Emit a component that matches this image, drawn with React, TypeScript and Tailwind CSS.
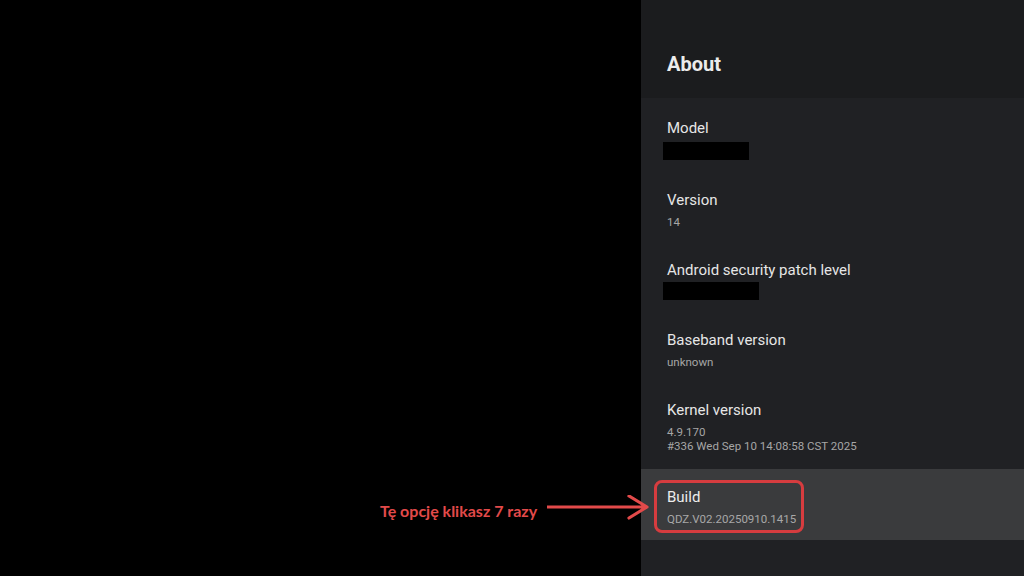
const items = [
  { label: "Model", redacted: 86, pt: "pt-4", pb: "pb-[14px]", gap: "mt-1" },
  { label: "Version", values: ["14"], pt: "pt-4", pb: "pb-[15px]" },
  { label: "Android security patch level", redacted: 96, pt: "pt-4", pb: "pb-[14px]", gap: "mt-[2px]" },
  { label: "Baseband version", values: ["unknown"], pt: "pt-4", pb: "pb-[15px]" },
  {
    label: "Kernel version",
    values: ["4.9.170", "#336 Wed Sep 10 14:08:58 CST 2025"],
    pt: "pt-4",
    pb: "pb-[17px]",
  },
];

type Item = {
  label: string;
  values?: string[];
  redacted?: number;
  pt: string;
  pb: string;
  gap?: string;
};

function Row({ item }: { item: Item }) {
  return (
    <div className={`px-[26px] ${item.pt} ${item.pb}`}>
      <div className="text-[15px] leading-5 text-[#e6e6e6]">{item.label}</div>
      {item.redacted ? (
        <div
          className={`${item.gap} -ml-1 h-[18px] bg-black`}
          style={{ width: item.redacted }}
        />
      ) : (
        <div className="mt-[5px]">
          {item.values?.map((v) => (
            <div key={v} className="text-[11.5px] leading-[14px] text-[#a6a6a6]">
              {v}
            </div>
          ))}
        </div>
      )}
    </div>
  );
}

export default function App() {
  return (
    <div className="relative flex h-[576px] w-[1024px] overflow-hidden bg-black font-['Roboto',sans-serif]">
      {/* Lewa część — czarne tło */}
      <div className="w-[641px] bg-black" />

      {/* Panel ustawień */}
      <div className="flex flex-1 flex-col bg-[#202124]">
        <div className="h-[98px] bg-[#1b1c1e] px-[26px] pt-[50px]">
          <h1 className="text-[20px] font-bold leading-7 text-[#ececec]">About</h1>
        </div>
        <div className="pt-[4px]">
          {items.map((item) => (
            <Row key={item.label} item={item} />
          ))}
          {/* Build — zaznaczony */}
          <div className="-mt-px bg-[#3a3b3d] px-[13px] pt-[11px] pb-[7px]">
            <div className="w-[150px] rounded-lg border-[3px] border-[#d63c3f] pl-[10px] pt-[4px] pb-[4px]">
              <div className="text-[15px] leading-5 text-[#ececec]">Build</div>
              <div className="mt-[5px] text-[11.5px] leading-[14px] text-[#a8a8a8]">
                QDZ.V02.20250910.1415
              </div>
            </div>
          </div>
        </div>
      </div>

      {/* Adnotacja ze strzałką */}
      <div className="absolute left-[380px] top-[495px] flex items-center gap-[10px]">
        <span className="font-['Lato',sans-serif] text-[16px] font-bold leading-6 text-[#e24a4a]">
          Tę opcję klikasz 7 razy
        </span>
        <svg width="104" height="32" viewBox="0 0 104 32" className="shrink-0">
          <path
            d="M0 12 H100 M82 1 L100 12 L82 23"
            fill="none"
            stroke="#e24a4a"
            strokeWidth="3.2"
            strokeLinecap="round"
            strokeLinejoin="round"
          />
        </svg>
      </div>
    </div>
  );
}
